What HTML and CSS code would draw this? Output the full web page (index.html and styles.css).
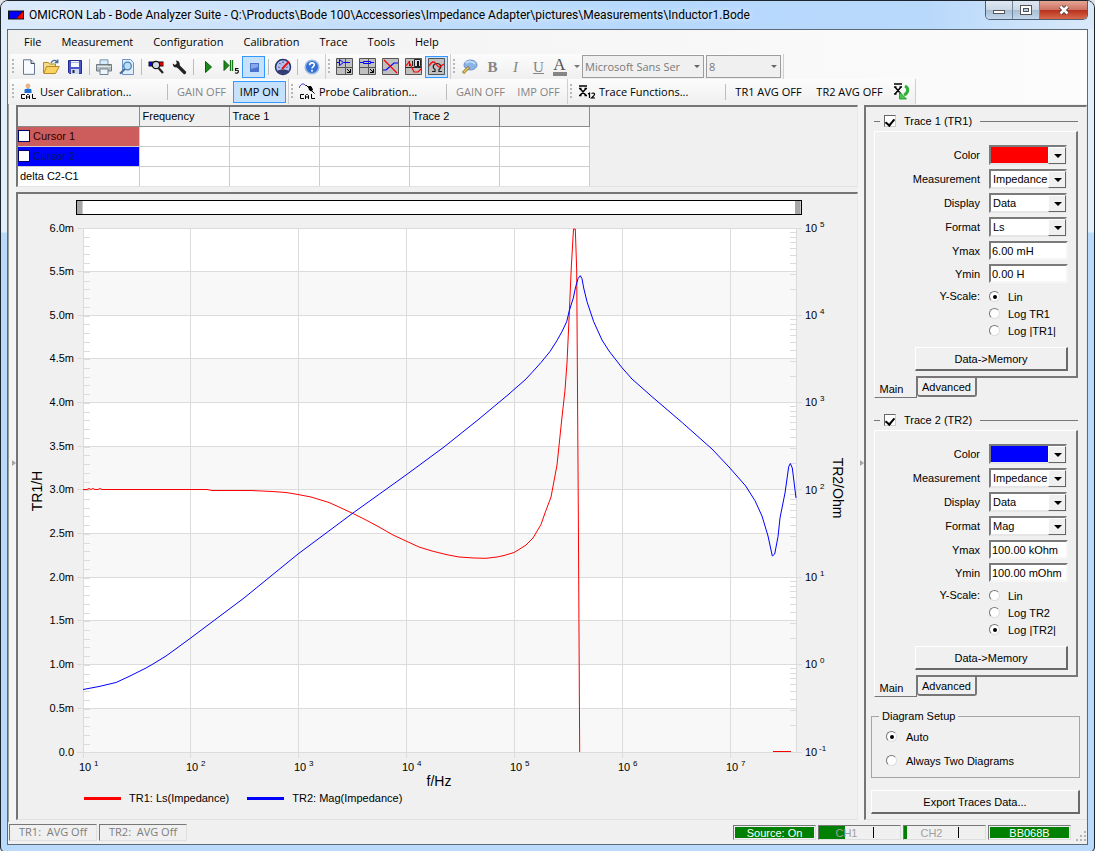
FILE: index.html
```html
<!DOCTYPE html>
<html lang="en">
<head>
<meta charset="utf-8">
<title>OMICRON Lab - Bode Analyzer Suite</title>
<link rel="stylesheet" href="styles.css">
</head>
<body>
<div class="window">
  <header class="titlebar">
    <svg class="app-icon" width="16" height="16" viewBox="0 0 16 16"><path d="M0 3.500h16v9H0z" fill="#111"/><path d="M1 4.500h13L8 11.500H1z" fill="#00f"/><path d="M15 4.500v7H8.500z" fill="#f00"/></svg>
    <h1 class="title">OMICRON Lab - Bode Analyzer Suite - Q:\Products\Bode 100\Accessories\Impedance Adapter\pictures\Measurements\Inductor1.Bode</h1>
    <div class="caption-buttons">
      <button class="cap" aria-label="Minimize"><svg width="14" height="12" viewBox="0 0 14 12"><rect x="1.500" y="6.500" width="11" height="3" fill="#fff" stroke="#555"/></svg></button>
      <button class="cap" aria-label="Maximize"><svg width="14" height="12" viewBox="0 0 14 12"><rect x="1.500" y="1.500" width="11" height="9" fill="#fff" stroke="#555"/><rect x="4.500" y="4.500" width="5" height="3" fill="#b8cce2" stroke="#555"/></svg></button>
      <button class="cap close" aria-label="Close"><svg width="14" height="12" viewBox="0 0 14 12"><path d="M3.500 2.500l7 7m0-7l-7 7" stroke="#533" stroke-width="4.500"/><path d="M3.500 2.500l7 7m0-7l-7 7" stroke="#fff" stroke-width="2.600"/></svg></button>
    </div>
  </header>

  <div class="client">
    <nav class="menubar">
      <button>File</button><button>Measurement</button><button>Configuration</button><button>Calibration</button><button>Trace</button><button>Tools</button><button>Help</button>
    </nav>

    <div class="toolrow">
      <div class="toolbar">
        <button class="tool" aria-label="New"><svg width="16" height="16" viewBox="0 0 16 16"><path d="M2.500.800H10l3.500 3.500v11h-11z" fill="#f7fafe" stroke="#66778c"/><path d="M10 1v3.500h3.500" fill="#cfdded" stroke="#39495c"/></svg></button>
        <button class="tool" aria-label="Open"><svg width="17" height="16" viewBox="0 0 17 16"><path d="M.500 14V3.500h5l1 1.500h6V8" fill="#f5dd90" stroke="#b58a24"/><path d="M.800 14.500L3.500 7.500h12.800L12.500 14.500z" fill="#fbd261" stroke="#b58a24"/><path d="M8 4c1.500-3 4-3.500 6-1.500M14.800.500v3h-3" fill="none" stroke="#47719b" stroke-width="1.300"/></svg></button>
        <button class="tool" aria-label="Save"><svg width="16" height="16" viewBox="0 0 16 16"><path d="M1.500 1.500h13v13h-12l-1-1z" fill="#4a55c8" stroke="#222c8c"/><path d="M4 2h8v6H4z" fill="#f5f8ff"/><path d="M4 3.500h8" stroke="#a8b8d8"/><path d="M4 10h8v5H4z" fill="#cdd8f4"/><path d="M5.500 11h2v3h-2z" fill="#223"/></svg></button>
        <span class="sep"></span>
        <button class="tool" aria-label="Print"><svg width="16" height="16" viewBox="0 0 16 16"><path d="M4 .800h8V7H4z" fill="#d5eafa" stroke="#7f98ad"/><path d="M.500 5.500h15v6.500H.500z" fill="#b4bbc1" stroke="#707a82"/><path d="M1 7.500h14" stroke="#e4e8ec"/><path d="M4 10h8v5.500H4z" fill="#eef6fc" stroke="#728292"/><path d="M12.500 6.500h1.500" stroke="#3b4"/></svg></button>
        <button class="tool" aria-label="Print preview"><svg width="16" height="16" viewBox="0 0 16 16"><path d="M3.500.500h8L14.500 3.500v12h-11z" fill="#dfeeff" stroke="#6e92c8"/><circle cx="8.500" cy="7" r="3.800" fill="#b9e0f8" stroke="#4f7fae" stroke-width="1.300"/><path d="M5.800 10L1 14.800" stroke="#4d6d96" stroke-width="2"/></svg></button>
        <span class="sep"></span>
        <button class="tool" aria-label="Device search"><svg width="16" height="16" viewBox="0 0 16 16"><path d="M.500 2.500h15v5H.500z" fill="#111"/><path d="M1 3.500h4v3H1z" fill="#00e"/><path d="M12 3.500h3v3h-3z" fill="#e00"/><circle cx="8" cy="6" r="3.700" fill="#cfd8e4" stroke="#111" stroke-width="1.200"/><path d="M10.500 9l4.500 5" stroke="#222" stroke-width="2.200"/></svg></button>
        <button class="tool" aria-label="Options"><svg width="16" height="16" viewBox="0 0 16 16"><path d="M7 7l6.500 6.500" stroke="#222" stroke-width="3.200" stroke-linecap="round"/><path d="M5 1.500c3 0 4.500 3 3.500 5.500-2 2-5.500 2-6.500-.500L1.800 4.500l2.200 1.500 1.800-1.800z" fill="#222"/></svg></button>
        <span class="sep"></span>
        <button class="tool" aria-label="Continuous sweep"><svg width="16" height="16" viewBox="0 0 16 16"><path d="M5.500 2.500v11l6-5.500z" fill="#1b8a1b" stroke="#0c5c0c"/></svg></button>
        <button class="tool" aria-label="Single sweep"><svg width="16" height="16" viewBox="0 0 16 16"><path d="M1 1.500v10l5-5z" fill="#1b8a1b" stroke="#0c5c0c"/><path d="M7.500 1v11M9.500 1v11" stroke="#187818" stroke-width="1.300"/><path d="M15.500 9.500H12.500v2c2.500-.600 3.200.300 2.800 1.500s-2 1.500-3.300.800" fill="none" stroke="#111" stroke-width="1.100"/></svg></button>
        <button class="tool on" aria-label="Stop" aria-pressed="true"><svg width="16" height="16" viewBox="0 0 16 16"><path d="M4 4h9v9H4z" fill="#4a74cc"/><path d="M5 5h7v3L5 10z" fill="#86a8ea"/></svg></button>
        <span class="sep"></span>
        <button class="tool" aria-label="Signal meter"><svg width="18" height="18" viewBox="0 0 18 18"><circle cx="9" cy="9" r="7.500" fill="#adc2f2" stroke="#25306e" stroke-width="1.500"/><path d="M3 13c3-2 9-2 12 0-3 4-9 4-12 0z" fill="#333c72"/><path d="M4.500 9l1 .500M5.500 5l1 1.200M9 3.500v1.500M13.500 9l-1 .500" stroke="#223"/><path d="M8 11L15 3.500" stroke="#e11" stroke-width="2"/></svg></button>
        <span class="sep"></span>
        <button class="tool" aria-label="Help"><svg width="16" height="16" viewBox="0 0 16 16"><circle cx="8" cy="8" r="6.800" fill="#3470d8" stroke="#9db8df" stroke-width="1.500"/><path d="M5.600 6.300c0-3.300 5-3 4.700-.300C10.200 7.500 8 7.600 8 9.500" fill="none" stroke="#fff" stroke-width="1.600"/><circle cx="8" cy="11.800" r="1" fill="#fff"/></svg></button>
      </div>
      <div class="toolbar">
        <button class="tool" aria-label="Gain/phase internal"><svg width="17" height="17" viewBox="0 0 17 17"><path d="M.500.500h16v16H.500z" fill="#c0c0c0" stroke="#555"/><path d="M9.500 0v17M0 9.500h17" stroke="#555"/><path d="M1 4.500h3m4 0h6M3.500 1.500v6l4-3z" stroke="#00f" fill="none"/><path d="M11 11l3.500 3.500m0-3.500v3.500H11" stroke="#000" fill="none"/></svg></button>
        <button class="tool" aria-label="Gain/phase external"><svg width="17" height="17" viewBox="0 0 17 17"><path d="M.500.500h16v16H.500z" fill="#c0c0c0" stroke="#555"/><path d="M9.500 0v17M0 9.500h17" stroke="#555"/><path d="M1 4.500h3m8 0h3M4.500 3.500h7v2h-7z" stroke="#00f" fill="none"/><path d="M11 11l3.500 3.500m0-3.500v3.500H11" stroke="#000" fill="none"/></svg></button>
        <button class="tool" aria-label="Frequency sweep"><svg width="17" height="17" viewBox="0 0 17 17"><path d="M.500.500h16v16H.500z" fill="#c0c0c0" stroke="#555"/><path d="M1 12h3l8-7h4" stroke="#00f" fill="none" stroke-width="1.200"/><path d="M2 2l13 13" stroke="#f00" stroke-width="1.300"/></svg></button>
        <button class="tool" aria-label="Impedance sweep"><svg width="17" height="17" viewBox="0 0 17 17"><path d="M.500.500h16v16H.500z" fill="#c0c0c0" stroke="#555"/><path d="M.500 9.500h16M4.500 3v5M7.500 3v5" stroke="#222" fill="none"/><path d="M9.500 1.500h6v7h-6z" fill="#ddd" stroke="#222"/><path d="M12 3h2v5h-2z" fill="#111"/><path d="M1 8l3-4 5 10h4l3-3" stroke="#f00" fill="none" stroke-width="1.200"/></svg></button>
        <button class="tool on" aria-label="Frequency sweep, impedance" aria-pressed="true"><svg width="17" height="17" viewBox="0 0 17 17"><path d="M.500.500h16v16H.500z" fill="#c0c0c0" stroke="#555"/><path d="M4 13.500h3v-2c-3-2-2-6 2-6s5 4 2 6v2h3" stroke="#222" fill="none" stroke-width="1.200"/><path d="M1 8c3-5 5-5 7-2s4 4 5 2l3-2" stroke="#f00" fill="none" stroke-width="1.300"/></svg></button>
      </div>
      <div class="toolbar">
        <button class="tool" aria-label="Comment"><svg width="17" height="16" viewBox="0 0 17 16"><ellipse cx="9.500" cy="6" rx="6.500" ry="5" fill="#8ab4e8" stroke="#6f95c8"/><path d="M5 4c2-2 7-2 9 1" stroke="#c4dcf8" stroke-width="2" fill="none"/><path d="M2 14l6-6" stroke="#8d6a25" stroke-width="3"/><path d="M2.500 13.500l5-5" stroke="#f0d26a" stroke-width="1.500"/></svg></button>
        <button class="tool glyph bold" disabled>B</button>
        <button class="tool glyph italic" disabled>I</button>
        <button class="tool glyph underline" disabled>U</button>
        <button class="tool glyph fontcolor" disabled><span class="letter">A</span><span class="caret"></span></button>
        <span class="combo flat font"><select aria-label="Font" disabled><option>Microsoft Sans Ser</option></select></span>
        <span class="combo flat size"><select aria-label="Font size" disabled><option>8</option></select></span>
      </div>
    </div>

    <div class="toolrow">
      <div class="toolbar">
        <button class="cmd wide"><svg width="17" height="17" viewBox="0 0 17 17"><circle cx="8" cy="3" r="2.400" fill="#e9b48c"/><path d="M4.500 10V7q0-1.500 3.500-1.500t3.500 1.500v3z" fill="#1b6fd0"/><path d="M5 11.500H1.500v4H5M6.500 16v-3.500l1-1h1l1 1v3.500M6.500 14h3M12.500 11v4.500H16" fill="none" stroke="#000"/></svg>User Calibration...</button>
        <span class="sep"></span>
        <button class="cmd gain" disabled>GAIN OFF</button>
        <button class="cmd imp on" aria-pressed="true">IMP ON</button>
      </div>
      <div class="toolbar">
        <button class="cmd wide"><svg width="17" height="17" viewBox="0 0 17 17"><path d="M0 5C2 0 5 0 7 3" fill="none" stroke="#22c"/><path d="M7 2l6 6M9.500 3.500l2.500 0 1.500 3-1 1.500-2-1z" stroke="#000" fill="#000"/><path d="M12.500 7.500l3 3" stroke="#000"/><path d="M5 11.500H1.500v4H5M6.500 16v-3.500l1-1h1l1 1v3.500M6.500 14h3M12.500 11v4.500H16" fill="none" stroke="#000"/></svg>Probe Calibration...</button>
        <span class="sep"></span>
        <button class="cmd gain" disabled>GAIN OFF</button>
        <button class="cmd imp" disabled>IMP OFF</button>
      </div>
      <div class="toolbar">
        <button class="cmd wide"><svg width="18" height="14" viewBox="0 0 18 14"><path d="M1 1h8" stroke="#000" stroke-width="1.500"/><path d="M2 3.500l6 7M8 3.500l-6 7M1 3.500h2.500M6.500 3.500H9M1 10.500h2.500M6.500 10.500H9" stroke="#000" stroke-width="1.500"/><path d="M10 9l1.500-1v5M13.500 8.500c3-1.500 4 1 2 2.500l-2 2H17" fill="none" stroke="#000" stroke-width="1.200"/></svg>Trace Functions...</button>
        <span class="sep"></span>
        <button class="cmd avg">TR1 AVG OFF</button>
        <button class="cmd avg">TR2 AVG OFF</button>
        <button class="tool" aria-label="Reset averaging"><svg width="17" height="17" viewBox="0 0 17 17"><path d="M1 1h8" stroke="#000" stroke-width="1.500"/><path d="M2 4l6 7M8 4l-6 7M1 4h2.500M6.500 4H9M1 11h2.500" stroke="#000" stroke-width="1.500"/><path d="M12 3c4 2 3.500 7-1 9" fill="none" stroke="#2fae3a" stroke-width="3"/><path d="M6.500 9v7h7z" fill="#45c94c" stroke="#188d25" stroke-width=".800"/></svg></button>
      </div>
    </div>

    <main class="workspace">
      <div class="splitter"></div>
      <div class="left">
        <section class="sunken cursors">
          <table>
            <thead><tr><th class="name"></th><th>Frequency</th><th>Trace 1</th><th class="joined"></th><th>Trace 2</th><th class="joined"></th></tr></thead>
            <tbody>
              <tr><td class="red"><label><input type="checkbox">Cursor 1</label></td><td></td><td></td><td></td><td></td><td></td></tr>
              <tr><td class="blue"><label><input type="checkbox">Cursor 2</label></td><td></td><td></td><td></td><td></td><td></td></tr>
              <tr><td>delta C2-C1</td><td></td><td></td><td></td><td></td><td></td></tr>
            </tbody>
          </table>
        </section>
        <section class="sunken chart">
          <div class="range"><button aria-label="Range start"></button><button aria-label="Range end"></button></div>
          <svg class="plot" viewBox="19 215 839 575" role="img" aria-label="Ls and impedance magnitude over frequency">
            <defs>
              <path id="decade" d="M791 4.500h6M791 9h6M791 14h6M791 20h6M791 27h6M791 35h6M791 46h6M791 61h6"/>
            </defs>
            <path d="M84 228h714v524H84z" fill="#fff"/>
            <path d="M84 272h714v43H84zM84 359h714v43H84zM84 446h714v43H84zM84 533h714v44H84zM84 621h714v43H84zM84 708h714v44H84z" fill="#f8f8f8"/>
            <g class="grid">
              <path d="M78 228.500h725M78 271.500h720M78 315.500h725M78 358.500h720M78 402.500h725M78 446.500h720M78 489.500h725M78 533.500h720M78 577.500h725M78 620.500h720M78 664.500h725M78 708.500h720M78 752.500h725"/>
              <path d="M84.500 228v530M191.500 228v530M299.500 228v530M407.500 228v530M515.500 228v530M623.500 228v530M731.500 228v530M797.500 228v524"/>
              <path d="M87.500 237V752" stroke-width="6" stroke-dasharray="1 7.733"/>
              <use href="#decade" y="228"/><use href="#decade" y="315"/><use href="#decade" y="402"/><use href="#decade" y="490"/><use href="#decade" y="577"/><use href="#decade" y="664"/>
            </g>
            <path class="curve" stroke="#f00" d="M84 489.500h4l2-1 2 1 2-1 2 1h3l2-1 2 1h2H208L213 490.500 252 490.500 273 491.500 287 492.500 299 494.500 312 497 330 502.500 340 507 354 513.500 367 520 380 527 394 535 407 541 420 547 433 551 447 554.500 460 557 475 558 487 558.300 498 557 505 555.500 515 552.500 520 549.500 527 545 534 538 542 524.500 546 513 552 497 558 465 562.700 420 566 390 568 363 570.300 313 572.300 267 574.500 229H576.300L577.700 270 579.300 510 580.700 752M774 751.500H792"/>
            <path class="curve" stroke="#00f" d="M84 689.500L100 686.500 117 682.500 131 676 147 668 154 664 167 656 176 649.500 191 638.500 245 598 299 554 354 513 407 475 445 447 480 419 510 394 515 389.500 526 380 533 372.500 542 362.500 551 351.500 558 340.500 563 331.500 567.700 321.700 570.300 310.700 574.300 298 576.700 286.700 579 278.700 581.300 275.700 583 278.700 584.700 288 588 301.700 594.700 321.700 603 340 610 351 623 367.700 633 379 653 396.700 683.700 423 713 449 730 467 746.700 486 756 500.700 763 516 769 536 773.300 556 775.700 554 779 536.700 781 518 786 493 789.700 466.700 791.300 463.500 793.300 468 797 498"/>
            <g class="ticks left-ticks">
              <text x="75" y="232">6.0m</text><text x="75" y="275">5.5m</text><text x="75" y="319">5.0m</text><text x="75" y="362">4.5m</text><text x="75" y="406">4.0m</text><text x="75" y="450">3.5m</text><text x="75" y="493">3.0m</text><text x="75" y="537">2.5m</text><text x="75" y="581">2.0m</text><text x="75" y="624">1.5m</text><text x="75" y="668">1.0m</text><text x="75" y="712">0.5m</text><text x="75" y="756">0.0</text>
            </g>
            <g class="ticks">
              <text x="806" y="232">10</text><text x="806" y="319">10</text><text x="806" y="406">10</text><text x="806" y="494">10</text><text x="806" y="581">10</text><text x="806" y="668">10</text><text x="806" y="756">10</text>
              <text x="80" y="771">10</text><text x="187" y="771">10</text><text x="295" y="771">10</text><text x="403" y="771">10</text><text x="511" y="771">10</text><text x="619" y="771">10</text><text x="727" y="771">10</text>
            </g>
            <g class="exponents">
              <text x="821" y="227">5</text><text x="821" y="314">4</text><text x="821" y="401">3</text><text x="821" y="489">2</text><text x="821" y="576">1</text><text x="821" y="663">0</text><text x="820" y="751">-1</text>
              <text x="95" y="766">1</text><text x="202" y="766">2</text><text x="310" y="766">3</text><text x="418" y="766">4</text><text x="526" y="766">5</text><text x="634" y="766">6</text><text x="742" y="766">7</text>
            </g>
            <g class="axis-titles">
              <text x="440" y="786">f/Hz</text>
              <text transform="translate(43 491) rotate(-90)">TR1/H</text>
              <text transform="translate(834 488) rotate(90)">TR2/Ohm</text>
            </g>
          </svg>
          <div class="legend"><span class="key red"></span>TR1: Ls(Impedance)<span class="key blue"></span>TR2: Mag(Impedance)</div>
        </section>
      </div>
      <div class="splitter narrow"></div>

      <aside class="side sunken">
        <section class="trace">
          <label class="trace-head"><input type="checkbox" checked>Trace 1 (TR1)</label>
          <div class="page">
            <label for="c1">Color</label><span class="combo"><select id="c1" class="red"><option aria-label="Red"></option></select></span>
            <label for="m1">Measurement</label><span class="combo"><select id="m1"><option>Impedance</option></select></span>
            <label for="d1">Display</label><span class="combo"><select id="d1"><option>Data</option></select></span>
            <label for="f1">Format</label><span class="combo"><select id="f1"><option>Ls</option></select></span>
            <label for="x1">Ymax</label><input type="text" id="x1" value="6.00 mH">
            <label for="n1">Ymin</label><input type="text" id="n1" value="0.00 H">
            <span class="scale-label">Y-Scale:</span>
            <div class="radios">
              <label><input type="radio" name="s1" checked>Lin</label>
              <label><input type="radio" name="s1">Log TR1</label>
              <label><input type="radio" name="s1">Log |TR1|</label>
            </div>
            <button class="push">Data-&gt;Memory</button>
          </div>
          <div class="tabs"><button class="tab current">Main</button><button class="tab">Advanced</button></div>
        </section>
        <section class="trace">
          <label class="trace-head"><input type="checkbox" checked>Trace 2 (TR2)</label>
          <div class="page">
            <label for="c2">Color</label><span class="combo"><select id="c2" class="blue"><option aria-label="Blue"></option></select></span>
            <label for="m2">Measurement</label><span class="combo"><select id="m2"><option>Impedance</option></select></span>
            <label for="d2">Display</label><span class="combo"><select id="d2"><option>Data</option></select></span>
            <label for="f2">Format</label><span class="combo"><select id="f2"><option>Mag</option></select></span>
            <label for="x2">Ymax</label><input type="text" id="x2" value="100.00 kOhm">
            <label for="n2">Ymin</label><input type="text" id="n2" value="100.00 mOhm">
            <span class="scale-label">Y-Scale:</span>
            <div class="radios">
              <label><input type="radio" name="s2">Lin</label>
              <label><input type="radio" name="s2">Log TR2</label>
              <label><input type="radio" name="s2" checked>Log |TR2|</label>
            </div>
            <button class="push">Data-&gt;Memory</button>
          </div>
          <div class="tabs"><button class="tab current">Main</button><button class="tab">Advanced</button></div>
        </section>
        <fieldset class="setup">
          <legend>Diagram Setup</legend>
          <label><input type="radio" name="setup" checked>Auto</label>
          <label><input type="radio" name="setup">Always Two Diagrams</label>
        </fieldset>
        <button class="push export">Export Traces Data...</button>
      </aside>
    </main>

    <footer class="statusbar">
      <span class="cell">TR1:&nbsp; AVG Off</span>
      <span class="cell">TR2:&nbsp; AVG Off</span>
      <span class="spacer"></span>
      <span class="meter"><span class="full">Source: On</span></span>
      <span class="meter ch ch1"><span class="mark">CH1</span></span>
      <span class="meter ch ch2"><span class="mark">CH2</span></span>
      <span class="meter"><span class="full">BB068B</span></span>
      <svg class="gripper" width="12" height="12" viewBox="0 0 12 12"><path d="M9 1h2v2H9zM5 5h2v2H5zM9 5h2v2H9zM1 9h2v2H1zM5 9h2v2H5zM9 9h2v2H9z" fill="#b4b4b4"/></svg>
    </footer>
  </div>
</div>
</body>
</html>
```
FILE: styles.css
```css
* { box-sizing: border-box; }
html, body { height: 100%; }
body {
  margin: 0;
  background: #dfe3e8;
  color: #000;
  font: 11px/14px "Liberation Sans", Arial, sans-serif;
}
button, select, input { font: inherit; color: inherit; margin: 0; border-radius: 0; }
button { padding: 0; background: none; border: 0; white-space: nowrap; }
svg { display: block; flex: none; }

.window {
  display: flex;
  flex-direction: column;
  min-height: 100%;
  padding: 0 6px 7px 6px;
  border: 1px solid #1c242c;
  border-radius: 8px 8px 6px 6px;
  background: linear-gradient(#e3eefb 0, #e3eefb 231px, #b9dafb 232px);
}
.titlebar {
  display: flex;
  align-items: center;
  gap: 5px;
  height: 28px;
  margin: 0 -6px;
  padding: 0 6px 0 7px;
  border-radius: 7px 7px 0 0;
  background: linear-gradient(90deg, #dcebfb, #c5dffa 30%, #b5d8fd 60%, #b9d9fb 85%, #d9e9f9);
}
.title {
  flex: 1;
  margin: 0;
  font: 12px/16px Roboto, "Open Sans", sans-serif;
  white-space: nowrap;
  text-shadow: 0 0 6px #fff;
}
.caption-buttons {
  align-self: flex-start;
  display: flex;
  height: 19px;
  border: 1px solid #4d5f73;
  border-top: 0;
  border-radius: 0 0 5px 5px;
  overflow: hidden;
}
.cap {
  width: 27px;
  display: grid;
  place-items: center;
  border-right: 1px solid #73859b;
  background: linear-gradient(#dfe8f2, #cbd8e6 48%, #a9bdd3 52%, #c3d7ec);
}
.cap.close { width: 47px; border: 0; background: linear-gradient(#e4a695, #cf7363 48%, #b8321f 52%, #d8694a); }

.client {
  flex: 1;
  display: flex;
  flex-direction: column;
  border: 1px solid #5c6a78;
  background: #f0f0f0;
}
.menubar, .toolrow { font: 11px/16px "Open Sans", "Noto Sans", sans-serif; background: linear-gradient(90deg, #f0f0f0, #fcfcfc); }
.menubar { display: flex; height: 24px; padding: 0 6px; }
.menubar button { padding: 0 10px; }
.toolrow { display: flex; height: 25px; padding: 0 2px; }
.toolbar {
  display: flex;
  align-items: center;
  padding: 0 2px 0 7px;
  border-right: 1px solid #cfcfcf;
  background: linear-gradient(#fcfcfc, #f6f6f6 50%, #efefef);
  position: relative;
}
.toolbar::before {
  content: "";
  position: absolute;
  left: 2px;
  top: 5px;
  width: 2px;
  height: 15px;
  background: repeating-linear-gradient(#b8b8b8 0 2px, transparent 2px 4px);
}
.tool { width: 23px; height: 22px; display: flex; align-items: center; justify-content: center; border: 1px solid transparent; }
.on { border: 1px solid #3399ff; background: #c5e1fc; }
.sep { width: 6px; height: 16px; display: flex; justify-content: center; }
.sep::before { content: ""; width: 1px; background: #bdbdbd; }
.glyph { color: #858585; font: 15px/18px "Liberation Serif", serif; }
.bold { font-weight: bold; }
.italic { font-style: italic; }
.underline { text-decoration: underline; }
.fontcolor { width: 32px; gap: 7px; color: #555; }
.letter { border-bottom: 4px solid #858585; line-height: 14px; width: 14px; font-size: 17px; }
.caret { border: 3px solid transparent; border-top-color: #777; border-bottom: 0; }
.cmd { height: 22px; padding: 0 4px; text-align: center; }
.cmd:disabled { color: #858585; }
.cmd.wide { display: flex; align-items: center; gap: 3px; width: 147px; padding: 0 3px; }
.cmd.gain { width: 63px; }
.cmd.imp { width: 53px; }
.cmd.avg { width: 81px; }

.combo { position: relative; display: block; width: 78px; height: 20px; }
.combo select {
  appearance: none;
  width: 100%;
  height: 100%;
  padding: 0 17px 0 2px;
  background: #fff;
  border: 2px solid;
  border-color: #7b7b7b #e6e6e6 #e6e6e6 #7b7b7b;
}
.combo::before {
  content: "";
  position: absolute;
  right: 1px;
  top: 2px;
  bottom: 1px;
  width: 16px;
  background: #f0f0f0;
  border: 1px solid;
  border-color: #fff #666 #666 #fff;
  pointer-events: none;
}
.combo::after {
  content: "";
  position: absolute;
  right: 5px;
  top: 9px;
  border: 4px solid transparent;
  border-top-color: #000;
  border-bottom: 0;
  pointer-events: none;
}
.combo.flat { height: 23px; }
.combo.flat.font { width: 122px; }
.combo.flat.size { width: 75px; margin-left: 2px; }
.combo.flat::before { display: none; }
.combo.flat::after { top: 10px; right: 4px; border-width: 3px 3px 0; border-top-color: #666; }
.combo.flat select { background: #f0f0f0; border: 1px solid #9d9d9d; color: #7a7a7a; opacity: 1; }
.combo select.blue { background: #00f; }
.combo select.red { background: #f00; }

.workspace { flex: 1; display: flex; padding: 1px 0 2px; border-left: 1px solid #9a9a9a; }
.splitter { width: 7px; display: flex; align-items: center; justify-content: flex-end; background: #f4f4f4; }
.splitter.narrow { width: 6px; }
.splitter::after { content: ""; border: 3px solid transparent; border-left: 4px solid #a5a5a5; border-right: 0; }
.left { flex: 1; min-width: 0; display: flex; flex-direction: column; gap: 5px; }
.sunken { border: 2px solid; border-color: #757575 #e8e8e8 #e2e2e2 #757575; border-right-width: 1px; border-bottom-width: 1px; }

.cursors { height: 82px; overflow: hidden; }
.cursors table { border-collapse: collapse; table-layout: fixed; width: 571px; }
.cursors th, .cursors td { height: 20px; padding: 0 2px; text-align: left; font-weight: normal; border: 1px solid #cdcdcd; border-top: 0; border-left: 0; }
.cursors td { background: #fff; }
.cursors th { width: 90px; height: 19px; padding-left: 3px; background: #f0f0f0; border-color: #8b8b8b; border-left: 1px solid #8b8b8b; }
.cursors th.name { width: 121px; border-left: 0; }
.cursors th.joined { border-left: 1px solid #dedede; }
.cursors label { display: flex; align-items: center; gap: 3px; }
.cursors input { appearance: none; width: 12px; height: 12px; background: #fff; border: 1px solid #00006a; }
.cursors .red { background: #cd5c5c; color: #300; padding: 0; }
.cursors .blue { background: #00f; color: #001a60; padding: 0; }

.chart { flex: 1; display: flex; flex-direction: column; padding: 6px 0 5px; }
.range { display: flex; justify-content: space-between; height: 15px; margin: 0 55px 0 58px; background: #fff; border: 1px solid #000; }
.range button { width: 6px; background: #a6a6a6; border-right: 1px solid #ccc; }
.plot { flex: 1; width: 100%; min-height: 300px; }
.grid { fill: none; stroke: #dcdcdc; shape-rendering: crispEdges; }
.curve { fill: none; stroke-width: 1; }
.ticks { font-size: 11px; }
.left-ticks { text-anchor: end; }
.exponents { font-size: 8px; }
.axis-titles { font-size: 14px; text-anchor: middle; }
.legend { display: flex; align-items: center; height: 16px; padding-left: 66px; margin-bottom: 8px; }
.key { width: 37px; height: 3px; margin-right: 8px; }
.key.red { background: #f00; }
.key.blue { background: #00f; margin-left: 18px; }

.side { width: 223px; padding: 4px 6px 4px 5px; display: flex; flex-direction: column; }
.trace { margin: 0 2px 12px 3px; }
.trace-head { display: flex; align-items: center; height: 20px; gap: 8px; }
.trace-head::before { content: ""; width: 6px; height: 1px; background: #777; margin-right: -4px; }
.trace-head::after { content: ""; flex: 1; height: 1px; background: #777; }
.trace-head input {
  appearance: none;
  flex: none;
  display: grid;
  place-items: center;
  width: 12px;
  height: 12px;
  background: #fff;
  border: 1px solid;
  border-color: #666 #ccc #ccc #666;
}
.trace-head input:checked::before { content: ""; width: 4px; height: 7px; border: solid #000; border-width: 0 2px 2px 0; transform: rotate(40deg); }
.page {
  display: grid;
  grid-template-columns: 1fr 79px;
  gap: 4px 9px;
  align-items: center;
  padding: 13px 8px 5px 0;
  border: 1px solid;
  border-color: #fff #777 #777 #fff;
  border-right-width: 2px;
  border-bottom-width: 2px;
}
.page > label, .scale-label { text-align: right; }
.page input[type="text"] {
  width: 79px;
  height: 19px;
  padding: 0 1px;
  background: #fff;
  border: 2px solid;
  border-color: #7b7b7b #f6f6f6 #f6f6f6 #7b7b7b;
}
.scale-label { align-self: start; line-height: 19px; }
.radios { padding-top: 1px; }
.radios label { display: flex; align-items: center; height: 17px; gap: 8px; }
input[type="radio"] {
  appearance: none;
  flex: none;
  display: grid;
  place-items: center;
  width: 11px;
  height: 11px;
  background: #fff;
  border: 1px solid;
  border-color: #777 #ddd #ddd #777;
  border-radius: 50%;
}
input[type="radio"]:checked::before { content: ""; width: 4px; height: 4px; border-radius: 50%; background: #000; }
.push {
  height: 24px;
  border: 1px solid;
  border-color: #fff #696969 #696969 #fff;
  border-right-width: 2px;
  border-bottom-width: 2px;
  background: #f0f0f0;
}
.page .push { grid-column: 1 / -1; width: 153px; justify-self: end; margin-top: 4px; }
.tabs { display: flex; align-items: flex-start; height: 20px; }
.tab { height: 19px; width: 60px; border: 1px solid #777; border-top: 0; border-right-width: 2px; border-bottom-width: 2px; border-radius: 0 0 3px 3px; }
.tab.current { width: 43px; height: 22px; margin-top: -2px; padding: 4px 8px 0 0; border-left-color: #fff; border-right-width: 1px; border-bottom-width: 1px; background: #f0f0f0; border-radius: 0; }
.setup {
  display: flex;
  flex-direction: column;
  gap: 7px;
  height: 69px;
  margin: 0 0 12px;
  padding: 5px 14px 0;
  border: 1px solid #a5a5a5;
}
.setup legend { margin-left: -7px; padding: 0 3px; }
.setup label { display: flex; align-items: center; gap: 9px; height: 17px; }
.export { width: 209px; }

.statusbar { display: flex; align-items: center; gap: 2px; height: 22px; padding: 0 0 1px 1px; color: #7d7d7d; font: 11px/14px "Open Sans", "Noto Sans", sans-serif; }
.cell { width: 88px; height: 17px; padding: 0 9px; border: 1px solid; border-color: #777 #e0e0e0 #e0e0e0 #777; white-space: nowrap; }
.spacer { flex: 1; }
.meter { width: 83px; height: 15px; padding: 1px; display: flex; border: 1px solid; border-color: #777 #ddd #ddd #777; text-align: center; line-height: 12px; font-family: "Liberation Sans", Arial, sans-serif; }
.full { flex: 1; background: #008000; color: #fff; }
.mark { width: 54px; border-right: 1px solid #000; color: #a0a0a0; }
.ch1 { background: linear-gradient(90deg, #008000 26px, transparent 26px); }
.ch2 { background: linear-gradient(90deg, #008000 3px, transparent 3px); }
.gripper { margin: 6px 0 0 2px; }
```
